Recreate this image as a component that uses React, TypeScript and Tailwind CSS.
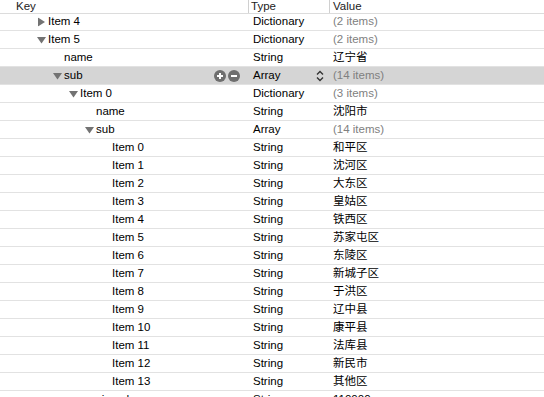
import { ReactNode } from 'react'

type Row = {
    key: string
    level: number
    type: string
    value: string
    toggle?: 'open' | 'closed'
    muted?: boolean
    selected?: boolean
}

const districts = [
    '和平区',
    '沈河区',
    '大东区',
    '皇姑区',
    '铁西区',
    '苏家屯区',
    '东陵区',
    '新城子区',
    '于洪区',
    '辽中县',
    '康平县',
    '法库县',
    '新民市',
    '其他区',
]

const rows: Row[] = [
    { key: 'Item 4', level: 0, type: 'Dictionary', value: '(2 items)', toggle: 'closed', muted: true },
    { key: 'Item 5', level: 0, type: 'Dictionary', value: '(2 items)', toggle: 'open', muted: true },
    { key: 'name', level: 1, type: 'String', value: '辽宁省' },
    { key: 'sub', level: 1, type: 'Array', value: '(14 items)', toggle: 'open', muted: true, selected: true },
    { key: 'Item 0', level: 2, type: 'Dictionary', value: '(3 items)', toggle: 'open', muted: true },
    { key: 'name', level: 3, type: 'String', value: '沈阳市' },
    { key: 'sub', level: 3, type: 'Array', value: '(14 items)', toggle: 'open', muted: true },
    ...districts.map((d, i) => ({ key: `Item ${i}`, level: 4, type: 'String', value: d })),
    { key: 'zipcode', level: 3, type: 'String', value: '110000' },
]

const indents = ['pl-[48px]', 'pl-[64px]', 'pl-[80px]', 'pl-[96px]', 'pl-[112px]']

function Triangle({ open }: { open: boolean }) {
    return (
        <svg width="9" height="9" viewBox="0 0 9 9" className="absolute -left-[11px] top-1/2 -translate-y-1/2">
            {open ? (
                <path d="M0 1.5 L9 1.5 L4.5 8 Z" fill="#737373" />
            ) : (
                <path d="M1 0 L8 4.5 L1 9 Z" fill="#737373" />
            )}
        </svg>
    )
}

function RowButtons() {
    return (
        <div className="flex items-center gap-[2px] pr-[8px]">
            <svg width="12" height="12" viewBox="0 0 12 12">
                <circle cx="6" cy="6" r="6" fill="#6e6e6e" />
                <path d="M3 6 H9 M6 3 V9" stroke="#fff" strokeWidth="2" />
            </svg>
            <svg width="12" height="12" viewBox="0 0 12 12">
                <circle cx="6" cy="6" r="6" fill="#6e6e6e" />
                <path d="M3 6 H9" stroke="#fff" strokeWidth="2" />
            </svg>
        </div>
    )
}

function Stepper() {
    return (
        <svg width="8" height="12" viewBox="0 0 8 12" className="mr-[5px]">
            <path d="M1 4.5 L4 1.5 L7 4.5" stroke="#333" strokeWidth="1.4" fill="none" />
            <path d="M1 7.5 L4 10.5 L7 7.5" stroke="#333" strokeWidth="1.4" fill="none" />
        </svg>
    )
}

function Cell({ children, className }: { children: ReactNode; className?: string }) {
    return <div className={`flex h-full items-center ${className ?? ''}`}>{children}</div>
}

export default function App() {
    return (
        <div
            className="h-[397px] w-[544px] overflow-hidden bg-white text-[11.5px] text-black"
            style={{ fontFamily: '"Liberation Sans", "Noto Sans CJK SC", sans-serif' }}
        >
            {/* Column header */}
            <div className="relative z-10 flex h-[14px] border-b border-[#dcdcdc] bg-white leading-none text-[#222]">
                <div className="flex w-[248px] items-center pl-[16px]">Key</div>
                <div className="flex w-[81px] items-center border-l border-[#d0d0d0] pl-[2px]">Type</div>
                <div className="flex flex-1 items-center border-l border-[#d0d0d0] pl-[3px]">Value</div>
            </div>

            {/* Outline rows */}
            <div className="-mt-px">
                {rows.map((row, i) => (
                    <div
                        key={i}
                        className={`flex h-[18px] border-b border-[#e2e2e2] ${row.selected ? 'bg-[#d5d5d5]' : ''}`}
                    >
                        <Cell className={`w-[248px] justify-between ${indents[row.level]}`}>
                            <span className="relative">
                                {row.toggle && <Triangle open={row.toggle === 'open'} />}
                                {row.key}
                            </span>
                            {row.selected && <RowButtons />}
                        </Cell>
                        <Cell className="w-[81px] justify-between pl-[5px]">
                            <span>{row.type}</span>
                            {row.selected && <Stepper />}
                        </Cell>
                        <Cell className={`flex-1 pl-[4px] ${row.muted ? 'text-[#808080]' : ''}`}>
                            {row.value}
                        </Cell>
                    </div>
                ))}
            </div>
        </div>
    )
}
